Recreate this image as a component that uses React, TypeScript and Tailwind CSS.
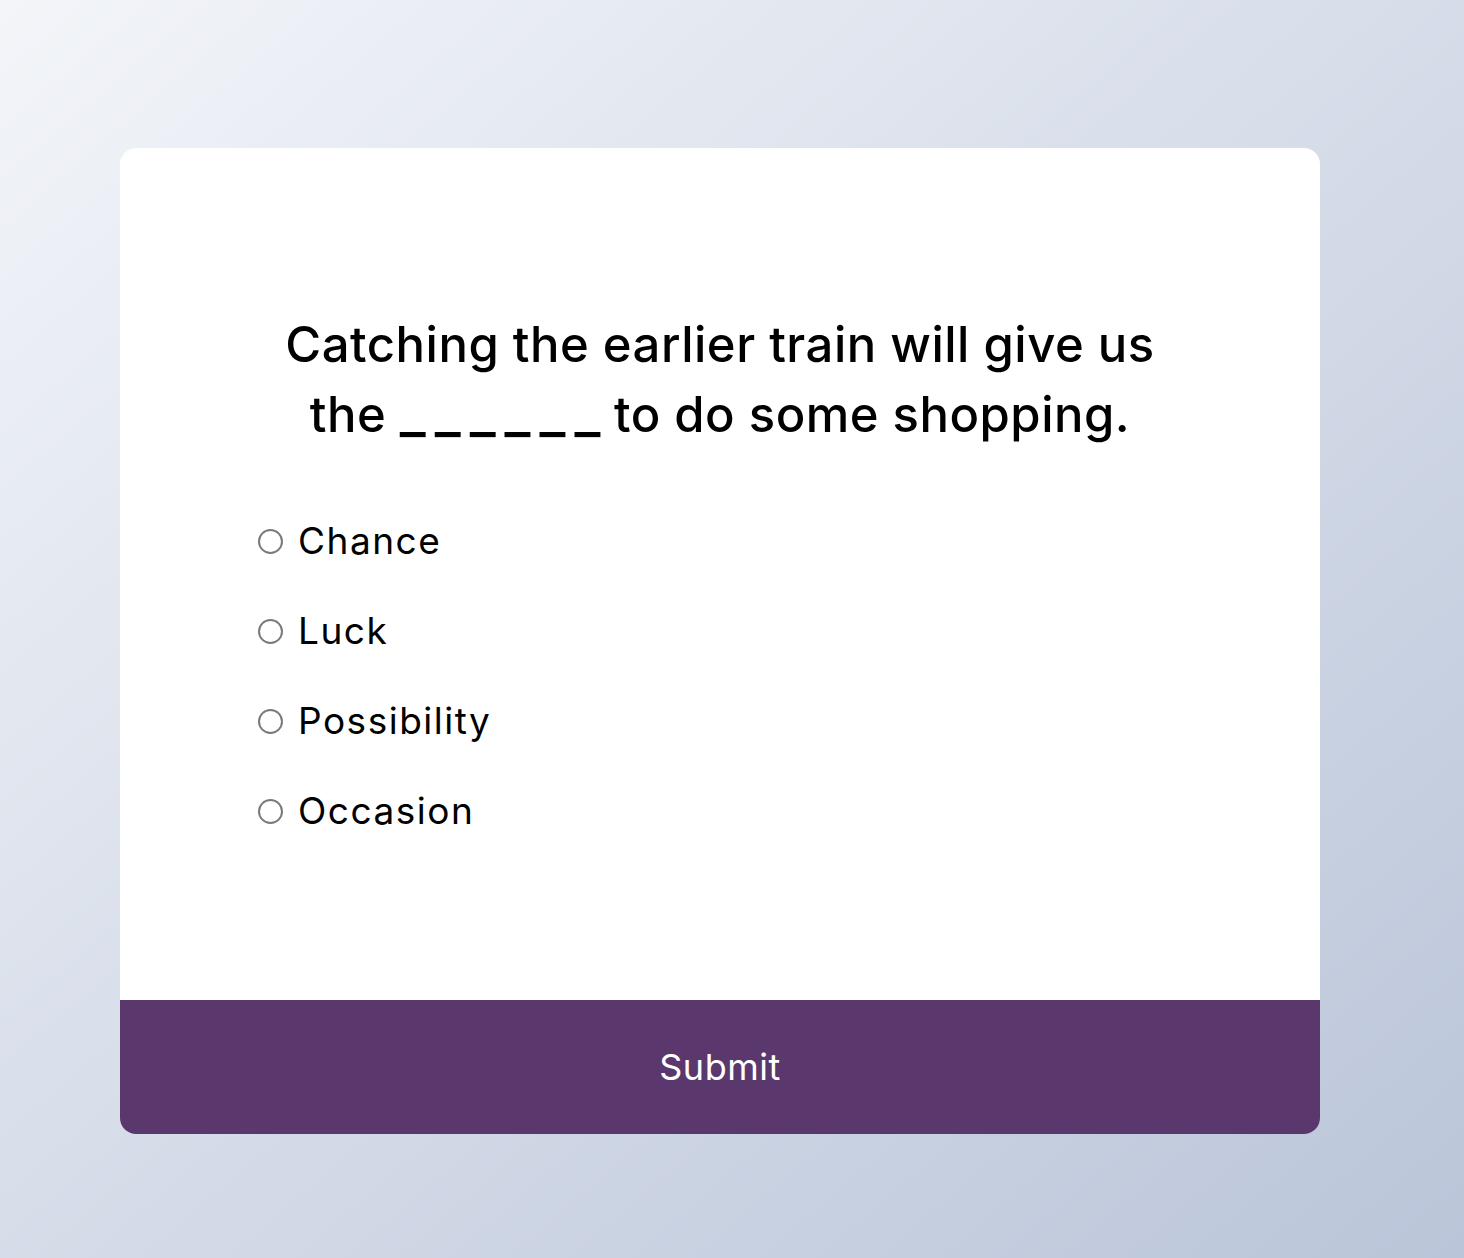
const options = ['Chance', 'Luck', 'Possibility', 'Occasion'];

export default function App() {
  return (
    <div className="min-h-[1258px] bg-linear-to-br from-[#f3f5f9] to-[#bac5d9] pt-[148px] font-['Inter','Open_Sans',sans-serif]">
      <div className="ml-[120px] flex w-[1200px] flex-col overflow-hidden rounded-2xl bg-white">
        <div className="flex h-[852px] flex-col justify-center px-[138px]">
          <h1 className="text-center text-[49px] leading-[70px] font-medium tracking-[0.5px] text-black">
            Catching the earlier train will give us the{' '}
            <span className="text-[56px] leading-none tracking-[9px]">
              _____<span className="tracking-normal">_</span>
            </span>{' '}
            to do some shopping.
          </h1>
          <ul className="mt-[64px] flex flex-col gap-[36px]">
            {options.map((opt) => (
              <li key={opt} className="flex h-[54px] items-center">
                <span className="h-[25px] w-[25px] rounded-full border-2 border-[#7a7a7a]" />
                <span className="ml-[15px] text-[37px] leading-[54px] tracking-[1.5px] text-black">{opt}</span>
              </li>
            ))}
          </ul>
        </div>
        <button className="h-[134px] w-full bg-[#5a376d] text-[36px] tracking-[0.5px] text-white">Submit</button>
      </div>
    </div>
  );
}
